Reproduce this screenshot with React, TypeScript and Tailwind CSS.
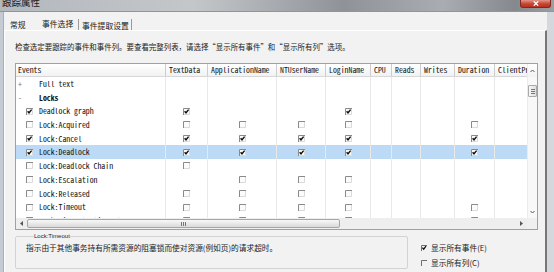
import React from "react";

type Mark = "c" | "u" | null;

type Row = {
  label: string;
  toggle?: "+" | "-";
  bold?: boolean;
  checked?: boolean;
  selected?: boolean;
  cells?: Mark[];
};

const MONO = "font-['Noto_Sans_Mono_CJK_SC','Liberation_Mono',monospace]";

const columns = [
  { name: "TextData", width: "w-[42px]" },
  { name: "ApplicationName", width: "w-[69px]" },
  { name: "NTUserName", width: "w-[49px]" },
  { name: "LoginName", width: "w-[45px]" },
  { name: "CPU", width: "w-[21px]" },
  { name: "Reads", width: "w-[29px]" },
  { name: "Writes", width: "w-[34px]" },
  { name: "Duration", width: "w-[40px]" },
  { name: "ClientProcessID", width: "w-[80px]" },
];

// order: TextData, ApplicationName, NTUserName, LoginName, CPU, Reads, Writes, Duration, ClientProcessID
const rows: Row[] = [
  { label: "Full text", toggle: "+" },
  { label: "Locks", toggle: "-", bold: true },
  { label: "Deadlock graph", checked: true, cells: ["c", null, null, "c", null, null, null, null, null] },
  { label: "Lock:Acquired", checked: false, cells: ["u", "u", "u", "u", null, null, null, "u", null] },
  { label: "Lock:Cancel", checked: true, cells: ["c", "c", "c", "c", null, null, null, "c", null] },
  { label: "Lock:Deadlock", checked: true, selected: true, cells: ["c", "c", "c", "c", null, null, null, "c", null] },
  { label: "Lock:Deadlock Chain", checked: false, cells: ["u", null, null, null, null, null, null, null, null] },
  { label: "Lock:Escalation", checked: false, cells: [null, "u", "u", "u", null, null, null, null, null] },
  { label: "Lock:Released", checked: false, cells: ["u", "u", "u", "u", null, null, null, null, null] },
  { label: "Lock:Timeout", checked: false, cells: ["u", "u", "u", "u", null, null, null, "u", null] },
  { label: "Lock:Timeout (timeout > 0)", checked: false, cells: ["u", "u", "u", "u", null, null, null, "u", null] },
];

function GridBox({ checked }: { checked: boolean }) {
  return (
    <svg width="7" height="7" viewBox="0 0 7 7" className="shrink-0">
      <rect x="0" y="0" width="7" height="7" fill="#fbfbfb" />
      <path d="M0.5 7V0.5H7" fill="none" stroke="#8a8a8a" />
      <path d="M6.5 1V6.5H1" fill="none" stroke="#dadada" />
      {checked && <path d="M1.6 3.2L3 4.8L5.6 1.6" fill="none" stroke="#111" strokeWidth="1.4" />}
    </svg>
  );
}

function SmallBox({ checked }: { checked: boolean }) {
  return (
    <svg width="6" height="6" viewBox="0 0 6 6" className="shrink-0">
      <path d="M0.5 6V0.5H6" fill="none" stroke="#6f6f6f" />
      {checked && <path d="M1.4 2.6L2.7 4.2L5 1.2" fill="none" stroke="#111" strokeWidth="1.3" />}
    </svg>
  );
}

function VScroll() {
  return (
    <div className="flex w-[10px] flex-col border-l border-[#ececec] bg-[#f8f8f8]">
      <div className="flex h-[13px] items-center justify-center bg-[linear-gradient(#ffffff,#f1f2f3)]">
        <svg width="5" height="3" viewBox="0 0 5 3">
          <path d="M0.5 3L2.5 1L4.5 3" fill="none" stroke="#555" />
        </svg>
      </div>
      <div className="flex-1">
        <div className="mx-auto mt-[8px] flex h-[12px] w-[9px] flex-col items-center justify-center gap-[1px] rounded-[1px] border border-[#a9a9a9] bg-[linear-gradient(90deg,#f7f7f7,#dedede)]">
          <span className="h-px w-[4px] bg-[#777]" />
          <span className="h-px w-[4px] bg-[#777]" />
          <span className="h-px w-[4px] bg-[#777]" />
        </div>
      </div>
      <div className="flex h-[11px] items-center justify-center">
        <svg width="5" height="3" viewBox="0 0 5 3">
          <path d="M0.5 0L2.5 2L4.5 0" fill="none" stroke="#555" />
        </svg>
      </div>
    </div>
  );
}

function HScroll() {
  return (
    <div className="flex h-[11px] bg-[#eeeeee]">
      <div className="flex w-[11px] items-center justify-center">
        <svg width="3" height="5" viewBox="0 0 3 5">
          <path d="M3 0L0 2.5L3 5Z" fill="#555" />
        </svg>
      </div>
      <div className="flex h-[9px] w-[313px] items-center justify-center gap-[1px] self-center rounded-[2px] border border-[#a6a6a6] bg-[linear-gradient(#f8f8f8,#dadada)]">
        <span className="h-[4px] w-px bg-[#777]" />
        <span className="h-[4px] w-px bg-[#777]" />
        <span className="h-[4px] w-px bg-[#777]" />
      </div>
      <div className="flex-1" />
      <div className="flex w-[11px] items-center justify-center">
        <svg width="3" height="5" viewBox="0 0 3 5">
          <path d="M0 0L3 2.5L0 5Z" fill="#555" />
        </svg>
      </div>
      <div className="w-[10px] bg-[#f0f0f0]" />
    </div>
  );
}

function EventGrid() {
  return (
    <div className={`mt-[10px] flex h-[167px] w-[523px] flex-col border border-[#a0a0a0] bg-white ${MONO} text-[7.8px] text-[#111]`}>
      <div className="flex h-[154px]">
        <div className="w-[511px] overflow-hidden">
          <div className="flex h-[13px] w-max border-b border-[#d7d7d7] bg-[linear-gradient(#ffffff,#f1f2f3)]">
            <div className="flex w-[150px] items-center border-r border-[#cdcdcd] pl-[2px]">Events</div>
            {columns.map((col) => (
              <div key={col.name} className={`flex ${col.width} items-center overflow-hidden whitespace-nowrap border-r border-[#cdcdcd] pl-[3px]`}>
                {col.name}
              </div>
            ))}
          </div>
          <div className="h-[141px] overflow-hidden">
            {rows.map((row) => (
              <div key={row.label} className={`flex h-[13.7px] w-max ${row.selected ? "bg-[#bcdaf6]" : ""}`}>
                <div className="flex w-[150px] items-center whitespace-nowrap border-r border-[#e9e9e9]">
                  <span className="w-[10px] pl-[2px] text-[#777]">{row.toggle ?? ""}</span>
                  <span className="flex w-[7px] items-center">
                    {row.checked !== undefined && <GridBox checked={row.checked} />}
                  </span>
                  <span className={`ml-[6px] ${row.bold ? "font-bold" : ""}`}>{row.label}</span>
                </div>
                {columns.map((col, i) => {
                  const mark = row.cells ? row.cells[i] : null;
                  return (
                    <div key={col.name} className={`flex ${col.width} items-center justify-center border-r border-[#e9e9e9]`}>
                      {mark && <GridBox checked={mark === "c"} />}
                    </div>
                  );
                })}
              </div>
            ))}
          </div>
        </div>
        <VScroll />
      </div>
      <HScroll />
    </div>
  );
}

export default function App() {
  return (
    <div className="flex h-[272px] w-[554px] flex-col overflow-hidden bg-[#f2f2f2] font-['Noto_Sans_CJK_SC',sans-serif] text-[#1a1a1a]">
      {/* title bar */}
      <div className="flex h-[12px] shrink-0 items-start justify-between border-b border-[#8e959c] bg-[linear-gradient(90deg,#b3b8bd_0%,#c4c7ca_35%,#8f9398_62%,#a9adb1_80%,#85898e_93%,#9aa0a6_100%)]">
        <span className="-mt-[2px] pl-[2px] text-[9.5px] leading-[9.5px] text-[#1b1b1b]">跟踪属性</span>
        <div className="mr-[3px] flex h-[8px] w-[31px] items-center justify-center rounded-b-[3px] border border-t-0 border-[#7d2a20] bg-[linear-gradient(#e0968a,#c9442f_55%,#b8311f)]">
          <svg width="6" height="5" viewBox="0 0 6 5">
            <path d="M0.8 0.3L5.2 4.7M5.2 0.3L0.8 4.7" stroke="#fff" strokeWidth="1.3" />
          </svg>
        </div>
      </div>

      <div className="flex flex-1">
        <div className="w-[4px] border-r border-[#a9aeb4] bg-[#c5cbd2]" />

        <div className="flex flex-1 flex-col">
          {/* tabs */}
          <div className="flex h-[18px] items-end pl-[1px] text-[7.8px] leading-[10px]">
            <div className="flex h-[14px] w-[31px] items-center pl-[5px] pt-[4px]">常规</div>
            <div className="flex h-[17px] w-[42px] items-center pl-[6px] pt-[5px]">事件选择</div>
            <div className="flex h-[11px] w-[54px] items-center border-x border-[#9a9a9a] pl-[3px] pt-[2px]">事件提取设置</div>
          </div>

          {/* panel */}
          <div className="flex flex-1 flex-col border-l border-t border-r-2 border-l-white border-t-white border-r-[#777] pl-[10px]">
            <p className="mt-[10px] h-[12px] text-[7.45px] leading-[12px] whitespace-nowrap">
              检查选定要跟踪的事件和事件列。要查看完整列表，请选择“显示所有事件”和“显示所有列”选项。
            </p>

            <EventGrid />

            <div className="mt-[3px] flex">
              <fieldset className="h-[36px] w-[393px] rounded-[2px] border border-[#d3d3d3] pl-[10px]">
                <legend className="ml-[8px] font-['Liberation_Sans',sans-serif] text-[6px] leading-[7px] text-[#222]">Lock:Timeout</legend>
                <p className="mt-[2px] h-[11px] text-[7.7px] leading-[11px] whitespace-nowrap">
                  指示由于其他事务持有所需资源的阻塞锁而使对资源(例如页)的请求超时。
                </p>
              </fieldset>
              <div className="ml-[13px] flex flex-col pt-[7.5px] text-[7.7px]">
                <div className="flex h-[15px] items-center gap-[4px]">
                  <SmallBox checked />
                  <span>显示所有事件(E)</span>
                </div>
                <div className="flex h-[15px] items-center gap-[4px]">
                  <SmallBox checked={false} />
                  <span>显示所有列(C)</span>
                </div>
              </div>
            </div>
          </div>
        </div>

        <div className="w-[7px] bg-[#d4d8dd]" />
      </div>
    </div>
  );
}
